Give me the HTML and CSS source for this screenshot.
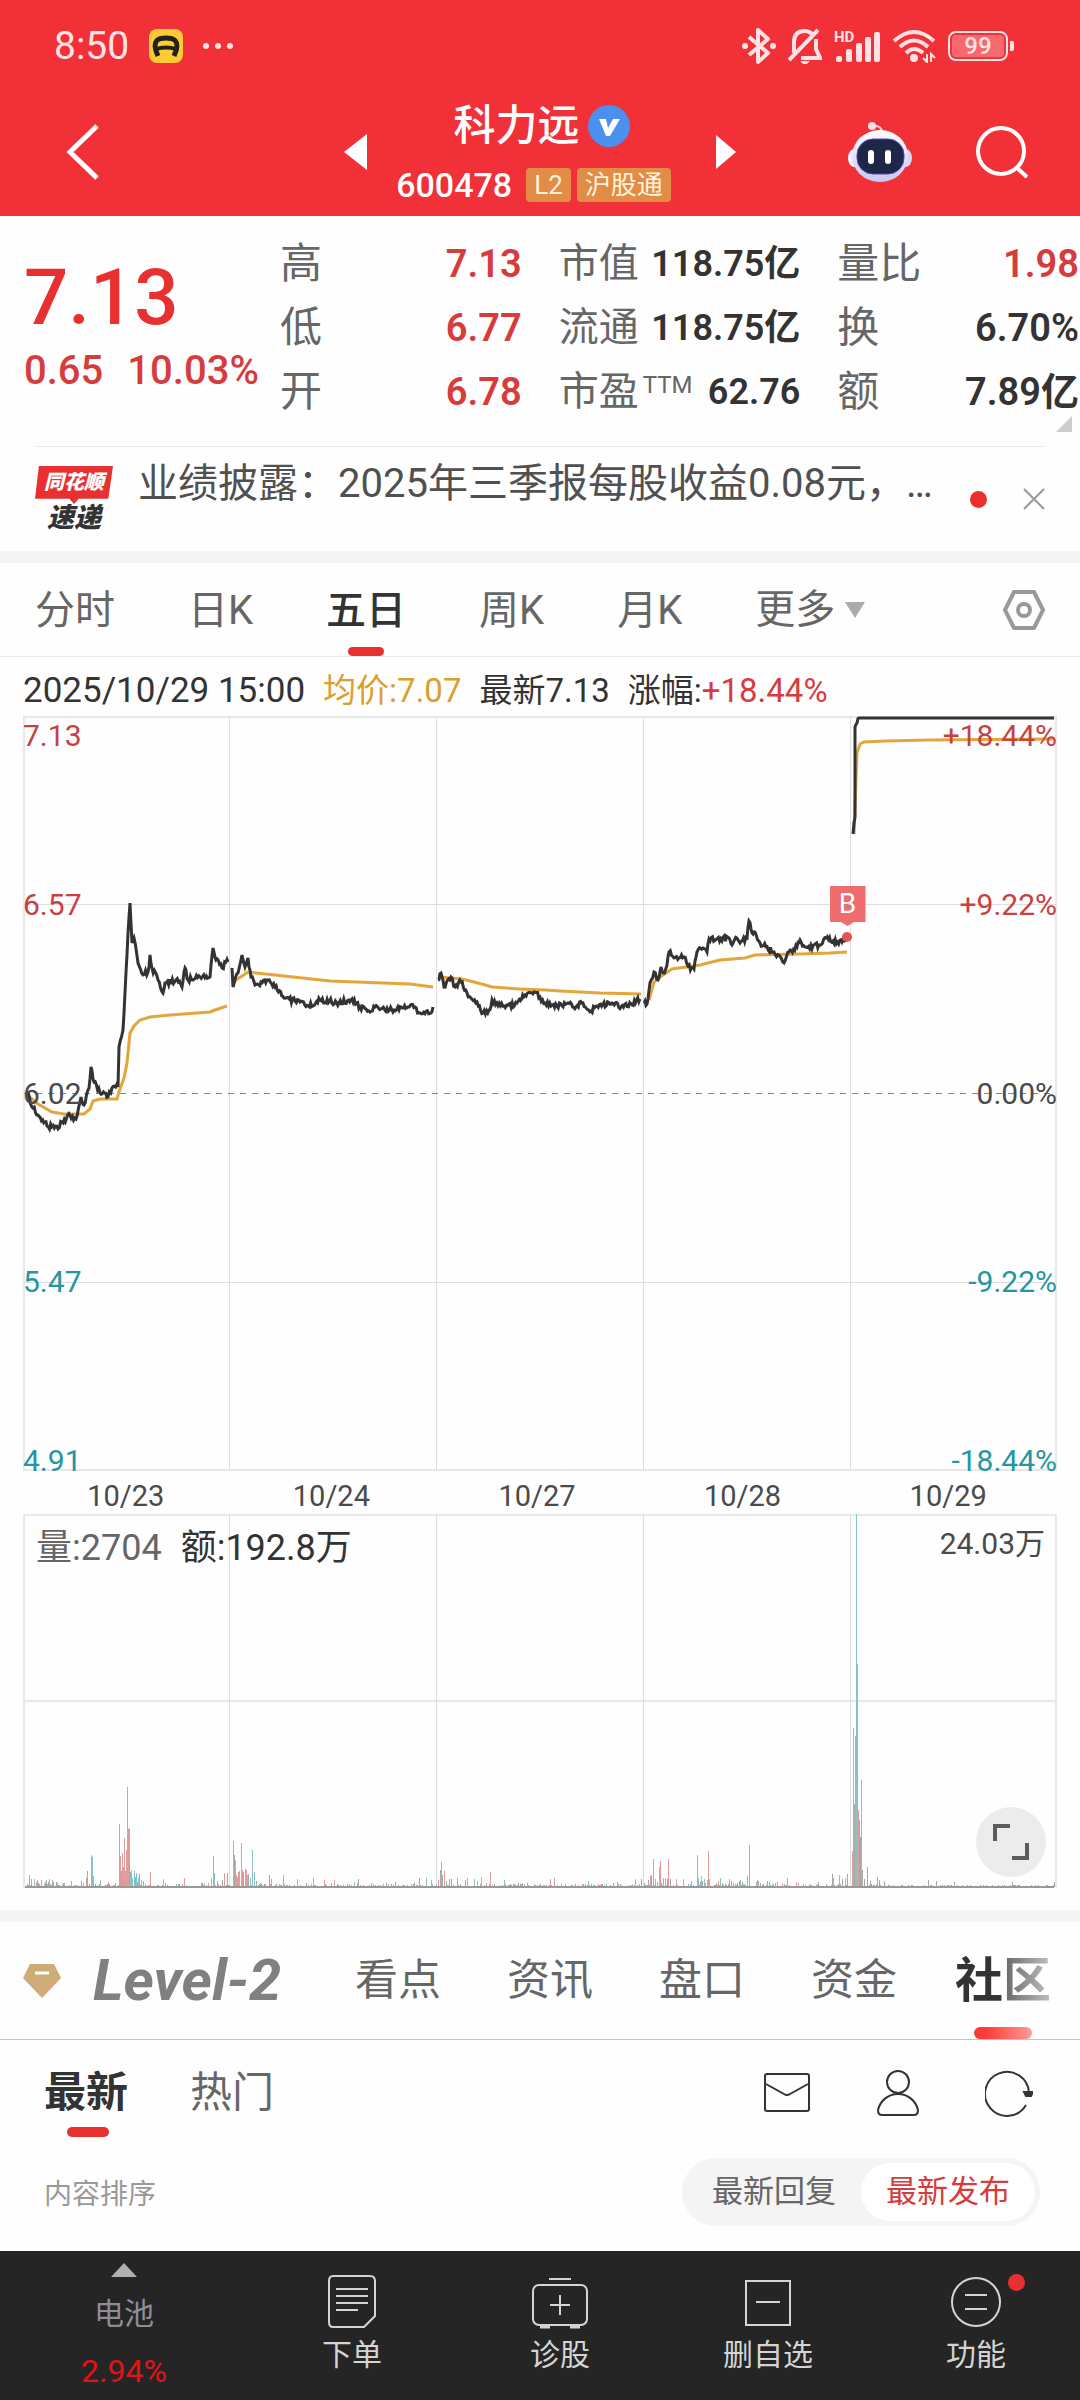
FILE: index.html
```html
<!DOCTYPE html>
<html lang="zh-CN">
<head>
    <meta charset="UTF-8">
    <meta name="viewport" content="width=device-width, initial-scale=1.0">
    <title>科力远 600478</title>
    <link rel="stylesheet" href="styles.css">
</head>
<body>

    <header class="header">
        <div class="status-bar">
            <span class="clock">8:50</span>
            <svg class="app-icon" width="34" height="34" viewBox="0 0 34 34">
                <rect width="34" height="34" rx="8" fill="#ffcb35"/>
                <path d="M9 27C1 10 11 9 17 9S33 10 25 27" fill="none" stroke="#22221c" stroke-width="5"/>
                <path d="M7 20Q17 17 27 20" fill="none" stroke="#22221c" stroke-width="4"/>
            </svg>
            <svg width="30" height="8" viewBox="0 0 30 8" fill="#ffe3e4">
                <circle cx="3" cy="4" r="3"/><circle cx="15" cy="4" r="3"/><circle cx="27" cy="4" r="3"/>
            </svg>
            <div class="status-icons">
                <svg width="34" height="38" viewBox="0 0 34 38">
                    <path d="M7 10L26 26L16 35V3L26 12L7 28" fill="none" stroke="#ffe3e4" stroke-width="4" stroke-linejoin="round"/>
                    <circle cx="3" cy="19" r="3" fill="#ffe3e4"/><circle cx="31" cy="19" r="3" fill="#ffe3e4"/>
                </svg>
                <svg width="34" height="38" viewBox="0 0 34 38" fill="none" stroke="#ffe3e4" stroke-width="4">
                    <path d="M1 33L30 3"/>
                    <path d="M6 26V15Q6 4 17 4Q21 4 24 7"/>
                    <path d="M28 12V22L32 31H13"/>
                    <path d="M12 34H22L19 37H15Z" fill="#ffe3e4" stroke="none"/>
                </svg>
                <svg width="46" height="34" viewBox="0 0 46 34" fill="#ffe3e4">
                    <text x="0" y="13" class="hd-text">HD</text>
                    <rect x="2" y="27" width="6" height="6" rx="2"/>
                    <rect x="12" y="20" width="6" height="13" rx="2"/>
                    <rect x="22" y="14" width="6" height="19" rx="2"/>
                    <rect x="31" y="8" width="6" height="25" rx="2"/>
                    <rect x="40" y="3" width="6" height="30" rx="2"/>
                </svg>
                <svg width="44" height="34" viewBox="0 0 44 34" fill="none" stroke="#ffe3e4" stroke-width="4">
                    <path d="M2 12Q22-6 42 12"/>
                    <path d="M8 18Q22 5 36 18"/>
                    <path d="M14 24Q22 16 31 24"/>
                    <circle cx="22" cy="29" r="4" fill="#ffe3e4" stroke="none"/>
                    <path d="M35 25V33L31 29M39 33V25L43 29" stroke-width="2"/>
                </svg>
                <span class="battery"><span class="battery-level">99</span></span>
            </div>
        </div>

        <nav class="title-bar">
            <button class="icon-btn back-btn" aria-label="返回">
                <svg width="34" height="58" viewBox="0 0 34 58"><path d="M31 3L4 29L31 55" fill="none" stroke="#fff" stroke-width="5"/></svg>
            </button>
            <div class="stock-switch">
                <button class="icon-btn" aria-label="上一只">
                    <svg width="23" height="36" viewBox="0 0 23 36"><path d="M23 0V36L0 18Z" fill="#fff"/></svg>
                </button>
                <div class="stock-title">
                    <h1>科力远
                        <svg width="42" height="42" viewBox="0 0 42 42">
                            <circle cx="21" cy="21" r="21" fill="#4a90ec"/>
                            <path d="M11 14H18L20 23L25 14H32L22 31H18Z" fill="#fff"/>
                        </svg>
                    </h1>
                    <div class="stock-code">600478 <span class="badge">L2</span><span class="badge">沪股通</span></div>
                </div>
                <button class="icon-btn" aria-label="下一只">
                    <svg width="20" height="34" viewBox="0 0 20 34"><path d="M0 0V34L20 17Z" fill="#fff"/></svg>
                </button>
            </div>
            <div class="title-actions">
                <button class="icon-btn" aria-label="助手">
                    <svg width="64" height="62" viewBox="0 0 64 62">
                        <defs>
                            <linearGradient id="robot" x1="0" y1="0" x2="0" y2="1"><stop offset="0" stop-color="#fff"/><stop offset="1" stop-color="#c9c6f3"/></linearGradient>
                        </defs>
                        <circle cx="24" cy="5" r="4" fill="#f6dfe9"/>
                        <path d="M25 5Q34 4 34 12" fill="none" stroke="#f6dfe9" stroke-width="2"/>
                        <ellipse cx="6" cy="37" rx="6" ry="9" fill="#f3f0ff"/><ellipse cx="58" cy="37" rx="6" ry="9" fill="#d9d6f8"/>
                        <ellipse cx="32" cy="35" rx="28" ry="26" fill="url(#robot)"/>
                        <rect x="9" y="18" width="47" height="35" rx="16" fill="#1e2747" stroke="#5a3fc0" stroke-width="1"/>
                        <rect x="20" y="29" width="6" height="14" rx="3" fill="#fff"/><rect x="37" y="29" width="6" height="14" rx="3" fill="#fff"/>
                    </svg>
                </button>
                <button class="icon-btn" aria-label="搜索">
                    <svg width="52" height="54" viewBox="0 0 52 54" fill="none" stroke="#fff" stroke-width="4">
                        <circle cx="25" cy="26" r="23"/><path d="M41 43L51 52"/>
                    </svg>
                </button>
            </div>
        </nav>
    </header>

    <section class="quote">
        <div class="price">
            <div class="price-last">7.13</div>
            <div class="price-change"><span>0.65</span><span>10.03%</span></div>
        </div>
        <div class="stats">
            <dl>
                <dt>高</dt><dd class="up">7.13</dd>
                <dt>低</dt><dd class="up">6.77</dd>
                <dt>开</dt><dd class="up">6.78</dd>
            </dl>
            <dl class="compact">
                <dt>市值</dt><dd>118.75亿</dd>
                <dt>流通</dt><dd>118.75亿</dd>
                <dt>市盈<sup>TTM</sup></dt><dd>62.76</dd>
            </dl>
            <dl>
                <dt>量比</dt><dd class="up">1.98</dd>
                <dt>换</dt><dd>6.70%</dd>
                <dt>额</dt><dd>7.89亿</dd>
            </dl>
        </div>
    </section>

    <section class="news">
        <div class="news-logo"><span class="news-brand">同花顺</span><span class="news-sub">速递</span></div>
        <a href="#" class="news-text">业绩披露：2025年三季报每股收益0.08元，…</a>
        <span class="dot"></span>
        <button class="icon-btn news-close" aria-label="关闭">
            <svg width="22" height="22" viewBox="0 0 22 22"><path d="M1 1L21 21M21 1L1 21" stroke="#999" stroke-width="2"/></svg>
        </button>
    </section>

    <nav class="period-tabs">
        <button>分时</button>
        <button>日K</button>
        <button class="active">五日</button>
        <button>周K</button>
        <button>月K</button>
        <button class="more">更多<svg width="20" height="16" viewBox="0 0 20 16"><path d="M0 0H20L10 16Z" fill="#aaa"/></svg></button>
        <button class="chart-settings" aria-label="设置">
            <svg width="44" height="42" viewBox="0 0 44 42" fill="none" stroke="#999" stroke-width="4">
                <path d="M12 3H32L41 21L32 39H12L3 21Z" stroke-linejoin="round"/><circle cx="22" cy="21" r="6"/>
            </svg>
        </button>
    </nav>

    <main class="charts">
        <div class="chart-info">
            <span class="info-date">2025/10/29 15:00</span>
            <span class="avg">均价:7.07</span>
            <span>最新7.13</span>
            <span class="info-rate">涨幅:<span class="up">+18.44%</span></span>
        </div>

        <div class="chart">
            <svg id="price-chart" viewBox="23 716 1034 755">
                <path class="frame" d="M24 717H1056V1470H24Z"/>
                <path class="grid" d="M24 904.500H1056M24 1282.500H1056M229.500 717V1470M436.500 717V1470M643.500 717V1470M850.500 717V1470"/>
                <path class="zero" d="M24 1093.500H1056"/>
            </svg>
            <div class="axis axis-left">
                <span class="l0 up">7.13</span><span class="l1 up">6.57</span><span class="l2">6.02</span><span class="l3 down">5.47</span><span class="l4 down">4.91</span>
            </div>
            <div class="axis axis-right">
                <span class="l0 up">+18.44%</span><span class="l1 up">+9.22%</span><span class="l2">0.00%</span><span class="l3 down">-9.22%</span><span class="l4 down">-18.44%</span>
            </div>
            <span class="buy-mark">B</span>
        </div>

        <div class="dates"><span>10/23</span><span>10/24</span><span>10/27</span><span>10/28</span><span>10/29</span></div>

        <div class="chart">
            <svg id="volume-chart" viewBox="23 0 1034 374">
                <path class="frame" d="M24 374V1H1056V374M24 187H1056"/>
                <path class="grid" d="M229.500 0V374M436.500 0V374M643.500 0V374M850.500 0V374"/>
            </svg>
            <div class="volume-info"><span class="muted">量:2704</span><span>额:192.8万</span><span class="volume-max">24.03万</span></div>
            <button class="expand-btn" aria-label="全屏">
                <svg width="38" height="38" viewBox="0 0 38 38" fill="none" stroke="#5c5c5c" stroke-width="4">
                    <path d="M3 18V3H18M35 20V35H20"/>
                </svg>
            </button>
        </div>
    </main>

    <nav class="content-tabs">
        <svg width="40" height="36" viewBox="0 0 40 36">
            <path d="M8 1H32L39 15L20 35L1 15Z" fill="#cfab78"/><path d="M13 10H27" stroke="#fff" stroke-width="3"/>
        </svg>
        <a href="#" class="level2">Level-2</a>
        <a href="#">看点</a>
        <a href="#">资讯</a>
        <a href="#">盘口</a>
        <a href="#">资金</a>
        <a href="#" class="active">社区</a>
    </nav>

    <section class="community">
        <div class="community-head">
            <button class="active">最新</button>
            <button>热门</button>
            <div class="community-actions">
                <button class="icon-btn" aria-label="消息">
                    <svg width="48" height="48" viewBox="0 0 48 48" fill="none" stroke="#333" stroke-width="2">
                        <rect x="2" y="5" width="44" height="37" rx="2"/><path d="M3 15L21 25Q24 27 27 25L45 15"/>
                    </svg>
                </button>
                <button class="icon-btn" aria-label="我的">
                    <svg width="48" height="48" viewBox="0 0 48 48" fill="none" stroke="#333" stroke-width="2">
                        <circle cx="24" cy="13" r="11"/><path d="M8 46Q4 46 4 41C6 32 14 25 24 25S42 32 44 41Q44 46 40 46Z"/>
                    </svg>
                </button>
                <button class="icon-btn" aria-label="刷新">
                    <svg width="48" height="48" viewBox="0 0 48 48" fill="none" stroke="#333" stroke-width="2">
                        <path d="M41 36A22 22 0 1 1 44 24"/><path d="M39 23H48L46 27H41Z" fill="#333"/>
                    </svg>
                </button>
            </div>
        </div>
        <div class="sort">
            <span>内容排序</span>
            <div class="segment">
                <button>最新回复</button>
                <button class="active">最新发布</button>
            </div>
        </div>
    </section>

    <footer class="bottom-bar">
        <a href="#" class="sector">
            <svg width="26" height="14" viewBox="0 0 26 14"><path d="M0 14H26L13 0Z" fill="#b0b0b0"/></svg>
            <span>电池</span>
            <span class="sector-rate">2.94%</span>
        </a>
        <a href="#">
            <svg width="56" height="56" viewBox="0 0 56 56" fill="none" stroke="#d4d4d4" stroke-width="2">
                <path d="M9 3H46Q51 3 51 8V43L40 54H9Q5 54 5 49V8Q5 3 9 3Z"/><path d="M12 16H44M12 23H44M12 30H44M12 37H34"/>
            </svg>
            <span>下单</span>
        </a>
        <a href="#">
            <svg width="56" height="56" viewBox="0 0 56 56" fill="none" stroke="#d4d4d4" stroke-width="2">
                <path d="M17 6H39M28 22V42M18 32H38"/><rect x="1" y="12" width="54" height="40" rx="6"/><path d="M8 54H18M38 54H48" stroke-width="3"/>
            </svg>
            <span>诊股</span>
        </a>
        <a href="#">
            <svg width="56" height="56" viewBox="0 0 56 56" fill="none" stroke="#d4d4d4" stroke-width="2">
                <rect x="6" y="8" width="44" height="44"/><path d="M16 29H40"/>
            </svg>
            <span>删自选</span>
        </a>
        <a href="#">
            <svg width="56" height="56" viewBox="0 0 56 56" fill="none" stroke="#d4d4d4" stroke-width="2">
                <circle cx="28" cy="29" r="24"/><path d="M17 22H39M17 36H39"/>
            </svg>
            <span>功能</span>
            <i class="dot"></i>
        </a>
    </footer>

    <script src="chart.js"></script>
</body>
</html>
```
FILE: styles.css
```css
:root {
    --red: #e93030;
    --up: #d63c3c;
    --down: #2396a0;
    --gold: #dc9f2c;
    --text: #333333;
    --text-2: #666666;
    --text-3: #999999;
    --header: #f13038;
    --status: #ffe3e4;
    --line: #e8e8e8;
    --strip: #f4f4f4;
}

* {
    box-sizing: border-box;
}

body {
    margin: 0;
    font-family: Roboto, "Noto Sans CJK SC", sans-serif;
    color: var(--text);
    background: #fefefe;
}

button {
    padding: 0;
    border: none;
    background: none;
    font: inherit;
    color: inherit;
}

a {
    color: inherit;
    text-decoration: none;
}

svg {
    display: block;
    flex: none;
}

.up {
    color: var(--up);
}

.down {
    color: var(--down);
}

.dot {
    width: 17px;
    height: 17px;
    border-radius: 50%;
    background: var(--red);
}

/* Header */
.header {
    background: var(--header);
    color: #fff;
}

.status-bar {
    display: flex;
    align-items: center;
    gap: 20px;
    height: 88px;
    padding: 4px 72px 0 54px;
    color: var(--status);
}

.clock {
    font-size: 39px;
}

.status-icons {
    display: flex;
    align-items: center;
    gap: 12px;
    margin-left: auto;
}

.hd-text {
    font-size: 15px;
    font-weight: 700;
}

.battery {
    position: relative;
    width: 60px;
    height: 30px;
    padding: 2px;
    border: 2px solid var(--status);
    border-radius: 8px;
}

.battery::after {
    content: "";
    position: absolute;
    right: -8px;
    top: 8px;
    width: 4px;
    height: 10px;
    border-radius: 0 2px 2px 0;
    background: var(--status);
}

.battery-level {
    display: block;
    height: 22px;
    border-radius: 4px;
    background: #f7696f;
    font-size: 24px;
    font-weight: 500;
    line-height: 22px;
    text-align: center;
}

.title-bar {
    display: grid;
    grid-template-columns: 1fr 392px 1fr;
    align-items: center;
    height: 128px;
}

.back-btn {
    justify-self: start;
    padding-left: 66px;
}

.stock-switch {
    display: flex;
    align-items: center;
    justify-content: space-between;
}

.stock-title {
    display: flex;
    flex-direction: column;
    align-items: center;
    gap: 18px;
}

.stock-title h1 {
    display: flex;
    align-items: center;
    gap: 8px;
    margin: 0;
    font-size: 42px;
    font-weight: 500;
    line-height: 48px;
}

.stock-code {
    display: flex;
    align-items: center;
    gap: 6px;
    margin-right: 16px;
    font-size: 34px;
    font-weight: 500;
    line-height: 34px;
}

.badge {
    padding: 0 8px;
    border-radius: 4px;
    background: #e28c48;
    color: #fff3d8;
    font-size: 26px;
    font-weight: 400;
}

.badge:first-child {
    margin-left: 8px;
}

.title-actions {
    display: flex;
    align-items: center;
    justify-content: flex-end;
    gap: 64px;
    padding-right: 52px;
}

/* Quote */
.quote {
    display: flex;
    position: relative;
    padding: 16px 1px 22px 24px;
}

.quote::after {
    content: "";
    position: absolute;
    right: 8px;
    bottom: 14px;
    border: 8px solid transparent;
    border-right-color: #ccc;
    border-bottom-color: #ccc;
}

.price {
    flex: 0 0 256px;
    padding-top: 26px;
    color: var(--red);
    font-weight: 500;
    white-space: nowrap;
}

.price-last {
    font-size: 78px;
    line-height: 80px;
}

.price-change {
    display: flex;
    gap: 24px;
    margin-top: 9px;
    color: var(--up);
    font-size: 40px;
    line-height: 48px;
}

.stats {
    display: grid;
    grid-template-columns: repeat(3, 1fr);
    gap: 37px;
    flex: 1;
}

.stats dl {
    display: grid;
    grid-template-columns: auto 1fr;
    grid-auto-rows: 64px;
    align-items: center;
    margin: 0;
    font-size: 42px;
    line-height: 64px;
    white-space: nowrap;
}

.stats dt {
    color: var(--text-2);
}

.stats dd {
    margin: 0;
    font-size: 38px;
    font-weight: 600;
    text-align: right;
}

.stats .compact {
    grid-template-columns: 84px 1fr;
    font-size: 40px;
}

.stats .compact dd {
    font-size: 36px;
}

.stats sup {
    margin-left: 4px;
    font-size: 24px;
    line-height: 0;
    vertical-align: 12px;
}

/* News strip */
.news {
    display: flex;
    align-items: center;
    margin: 0 35px;
    height: 105px;
    border-top: 1px solid #ececec;
}

.news-logo {
    display: flex;
    flex-direction: column;
    align-items: center;
    width: 78px;
    margin-right: 25px;
    font-style: italic;
    font-weight: 900;
}

.news-brand {
    width: 78px;
    height: 38px;
    background: var(--red);
    clip-path: polygon(5% 0, 100% 0, 94% 86%, 56% 86%, 50% 100%, 44% 86%, 0 86%);
    color: #fff;
    font-size: 20px;
    line-height: 33px;
    text-align: center;
}

.news-sub {
    font-size: 27px;
    line-height: 28px;
}

.news-text {
    flex: 1;
    margin-bottom: 30px;
    overflow: hidden;
    color: #505050;
    font-size: 40px;
    line-height: 48px;
    white-space: nowrap;
}

.news-close {
    margin-left: 36px;
}

/* Period tabs */
.period-tabs {
    display: flex;
    align-items: center;
    gap: 73px;
    height: 106px;
    padding: 0 34px 0 35px;
    border-top: 12px solid var(--strip);
    border-bottom: 1px solid var(--line);
    color: var(--text-2);
    font-size: 40px;
}

.period-tabs button {
    position: relative;
    height: 93px;
    line-height: 95px;
}

.period-tabs .active {
    color: var(--text);
    font-weight: 500;
}

.period-tabs .active::after {
    content: "";
    position: absolute;
    left: 50%;
    bottom: 0;
    width: 36px;
    height: 9px;
    margin-left: -18px;
    border-radius: 5px;
    background: var(--red);
}

.period-tabs .more {
    display: flex;
    align-items: center;
    gap: 10px;
}

.period-tabs .chart-settings {
    margin-left: auto;
}

/* Charts */
.charts {
    padding: 0 23px 22px;
}

.chart-info {
    display: flex;
    gap: 18px;
    padding-top: 8px;
    font-size: 33px;
    line-height: 51px;
    white-space: nowrap;
}

.info-date {
    font-size: 35px;
}

.avg {
    color: var(--gold);
}

.chart {
    position: relative;
}

.chart > svg {
    width: 100%;
    height: auto;
}

.frame {
    fill: none;
    stroke: var(--line);
    stroke-width: 2;
}

.grid {
    fill: none;
    stroke: #dedede;
    stroke-width: 1;
}

.zero {
    stroke: #888;
    stroke-width: 1;
    stroke-dasharray: 6 6;
    shape-rendering: crispEdges;
}

.price-line {
    fill: none;
    stroke: var(--text);
    stroke-width: 3;
}

.avg-line {
    fill: none;
    stroke: #e2a63a;
    stroke-width: 3;
}

.base-line {
    stroke: #999;
    stroke-width: 2;
}

.axis {
    position: absolute;
    top: 0;
    bottom: 0;
    left: 0;
    color: #4a4a4a;
    font-size: 30px;
    line-height: 36px;
}

.axis-right {
    left: auto;
    right: 0;
}

.axis span {
    position: absolute;
    margin-top: -18px;
}

.axis-right span {
    right: 0;
}

.axis .up {
    color: #c84040;
}

.axis .down {
    color: var(--down);
}

.axis .l0 { top: 0; margin-top: 2px; }
.axis .l1 { top: 25%; }
.axis .l2 { top: 50%; }
.axis .l3 { top: 75%; }
.axis .l4 { top: 100%; margin-top: -28px; }

.buy-mark {
    position: absolute;
    left: 78%;
    top: 170px;
    width: 36px;
    height: 40px;
    background: #ef6c6e;
    clip-path: polygon(0 0, 100% 0, 100% 90%, 68% 90%, 50% 100%, 32% 90%, 0 90%);
    color: #fff;
    font-size: 28px;
    line-height: 36px;
    text-align: center;
}

.dates {
    display: grid;
    grid-template-columns: repeat(5, 1fr);
    height: 43px;
    padding: 4px 6px 0 0;
    color: #4a4a4a;
    font-size: 29px;
    line-height: 43px;
    text-align: center;
}

.volume-info {
    position: absolute;
    top: 10px;
    left: 13px;
    right: 12px;
    display: flex;
    gap: 19px;
    font-size: 36px;
    line-height: 48px;
}

.muted {
    color: var(--text-2);
}

.volume-max {
    margin-left: auto;
    color: #4a4a4a;
    font-size: 30px;
    line-height: 40px;
}

.chart .expand-btn {
    position: absolute;
    right: 11px;
    bottom: 11px;
    display: flex;
    align-items: center;
    justify-content: center;
    width: 70px;
    height: 70px;
    border-radius: 50%;
    background: #ececec;
}

/* Content tabs */
.content-tabs {
    display: flex;
    align-items: center;
    gap: 66px;
    height: 130px;
    padding: 0 29px 0 22px;
    border-top: 12px solid var(--strip);
    border-bottom: 1px solid #c4c4c4;
    color: var(--text-2);
    font-size: 43px;
    line-height: 117px;
    white-space: nowrap;
}

.content-tabs .level2 {
    flex: 1;
    margin-left: -35px;
    color: #808080;
    font-size: 58px;
    font-style: italic;
    font-weight: 700;
}

.content-tabs .active {
    position: relative;
    margin-left: -8px;
    background: linear-gradient(to right, #333 50%, #6a6a6a 52%, #c0c0c0);
    background-clip: text;
    color: transparent;
    font-size: 48px;
    font-weight: 700;
}

.content-tabs .active::after {
    content: "";
    position: absolute;
    left: 50%;
    bottom: 0;
    width: 58px;
    height: 12px;
    margin-left: -29px;
    border-radius: 6px;
    background: linear-gradient(to right, #fb3c35 20%, #fd9a98);
}

/* Community */
.community {
    padding: 24px 40px 25px 44px;
}

.community-head {
    display: flex;
    gap: 62px;
    height: 73px;
    color: var(--text-2);
    font-size: 42px;
    line-height: 58px;
}

.community-head > button {
    position: relative;
    align-self: stretch;
    display: flex;
}

.community-head > .active {
    color: var(--text);
    font-weight: 700;
}

.community-head > .active::after {
    content: "";
    position: absolute;
    left: 50%;
    bottom: 0;
    width: 42px;
    height: 10px;
    margin-left: -19px;
    border-radius: 5px;
    background: var(--red);
}

.community-actions {
    display: flex;
    gap: 63px;
    margin-left: auto;
    padding: 5px 7px 0 0;
    align-items: flex-start;
}

.sort {
    display: flex;
    align-items: center;
    justify-content: space-between;
    margin-top: 21px;
    color: var(--text-3);
    font-size: 28px;
}

.segment {
    display: flex;
    padding: 5px;
    border-radius: 34px;
    background: var(--strip);
    color: var(--text-2);
    font-size: 31px;
    line-height: 58px;
}

.segment button {
    padding: 0 25px;
    border-radius: 29px;
}

.segment .active {
    background: #fff;
    color: var(--up);
}

/* Bottom bar */
.bottom-bar {
    display: grid;
    grid-template-columns: 248fr 208fr 208fr 208fr 208fr;
    background: #252525;
    color: #d4d4d4;
    font-size: 30px;
    line-height: 40px;
}

.bottom-bar a {
    position: relative;
    display: flex;
    flex-direction: column;
    align-items: center;
    gap: 6px;
    padding-top: 22px;
}

.bottom-bar .sector {
    gap: 17px;
    padding: 12px 0 9px;
    color: #8e8e98;
}

.bottom-bar .sector-rate {
    color: #e01414;
    font-size: 32px;
}

.bottom-bar .dot {
    position: absolute;
    top: 23px;
    left: 50%;
    margin-left: 32px;
}
```
FILE: chart.js
```javascript
const SVG_NS = 'http://www.w3.org/2000/svg';

// one array per trading day, "x,y" pairs
const PRICE = [
    '27,1093 33,1108 38,1115 45,1122 47,1126 58,1129 62,1122 70,1115 76,1119 81,1097 84,1105 89,1088 91,1067 94,1082 100,1093 108,1097 112,1088 118,1087 119,1047 123,1030 125,993 128,933 130,903 132,943 134,938 138,963 143,975 148,972 150,955 152,968 158,980 163,993 165,983 176,980 182,987 185,968 188,980 200,977 210,977 213,948 216,960 222,968 226,962 228,962',
    '232,968 233,987 238,973 242,955 245,967 248,958 251,977 255,985 267,980 275,987 284,998 300,1002 313,1006 320,1000 339,1003 351,1000 360,1007 370,1012 375,1007 399,1010 408,1007 415,1007 420,1013 431,1013 433,1007',
    '438,980 441,973 444,987 451,977 455,987 461,982 467,993 477,1002 483,1013 489,1010 492,1000 504,1006 517,1003 525,995 534,992 540,997 545,1003 557,1006 568,1003 576,1007 583,1003 591,1011 597,1006 612,1003 621,1007 631,1004 640,999',
    '644,1003 647,1004 650,983 654,972 658,980 661,967 663,973 667,965 669,952 674,958 684,957 688,966 694,969 697,952 703,948 707,952 709,939 729,938 732,945 737,938 740,943 747,938 749,921 752,933 755,932 760,943 774,952 784,963 789,952 797,947 800,940 805,947 819,945 826,938 833,941 842,942 847,937',
    '853,834 855,817 855,727 857,723 859,718 1054,718'
];

const AVERAGE = [
    '27,1095 38,1104 52,1112 64,1114 84,1114 90,1109 93,1101 100,1099 117,1099 119,1092 124,1078 127,1063 130,1033 134,1026 140,1020 150,1017 170,1015 210,1012 215,1010 227,1006',
    '233,982 248,972 275,975 330,981 410,984 433,987',
    '440,977 462,979 478,983 492,987 520,989 545,990 560,991 600,993 641,994',
    '649,1000 654,982 660,977 672,969 700,965 720,960 745,958 755,955 800,954 830,953 847,952',
    '854,834 857,753 860,744 864,742 885,741 930,740 1054,739'
];

// x, height, color (r = up, t = down, g = flat)
const VOLUME = [
    [29, 12, 't'], [31, 8, 't'], [34, 8, 't'], [37, 7, 'g'], [41, 7, 't'], [46, 7, 'g'], [49, 8, 't'], [71, 6, 'r'], [81, 6, 'r'],
    [86, 9, 'r'], [87, 16, 'g'], [91, 32, 'r'], [92, 30, 't'], [93, 11, 't'], [100, 7, 't'],
    [119, 63, 'r'], [120, 31, 'r'], [121, 16, 'g'], [122, 34, 'r'], [123, 20, 'r'], [124, 49, 'r'], [125, 16, 'r'], [126, 37, 'r'],
    [127, 100, 'r'], [128, 58, 'r'], [129, 59, 'r'], [129, 27, 'g'], [130, 15, 't'], [131, 17, 't'], [132, 9, 't'], [134, 16, 't'],
    [135, 10, 'g'], [136, 14, 't'], [138, 9, 't'], [139, 13, 'g'], [141, 7, 't'], [143, 6, 'g'], [150, 15, 'r'], [163, 8, 'r'], [184, 9, 'r'],
    [211, 9, 'r'], [213, 31, 'r'], [214, 14, 't'], [217, 6, 't'], [222, 7, 'g'], [224, 14, 'r'], [227, 14, 'g'],
    [233, 46, 't'], [234, 32, 'g'], [235, 27, 'r'], [236, 12, 'r'], [237, 10, 'r'], [238, 15, 'r'], [239, 16, 'r'], [241, 44, 't'],
    [242, 17, 'r'], [243, 15, 'g'], [245, 18, 'r'], [246, 17, 'r'], [247, 12, 't'], [248, 13, 'g'], [250, 9, 't'], [252, 37, 't'],
    [254, 15, 't'], [256, 6, 'g'], [269, 12, 'g'], [271, 8, 't'], [283, 12, 't'], [297, 8, 't'], [313, 9, 't'], [324, 7, 'r'],
    [334, 7, 'r'], [358, 8, 'g'], [395, 5, 'g'], [419, 9, 'g'], [426, 9, 't'], [431, 7, 't'],
    [438, 7, 'r'], [440, 17, 'g'], [441, 25, 'r'], [442, 12, 'g'], [444, 16, 'r'], [446, 6, 't'], [449, 8, 'r'], [451, 8, 'g'], [457, 9, 'r'],
    [465, 7, 'g'], [467, 9, 't'], [474, 8, 't'], [477, 6, 't'], [481, 10, 't'], [490, 15, 'r'], [504, 7, 't'], [550, 8, 'r'], [554, 9, 'g'],
    [588, 6, 't'], [617, 5, 'g'], [635, 8, 'r'], [641, 8, 'g'],
    [648, 7, 'g'], [650, 11, 'r'], [651, 12, 'g'], [653, 28, 'r'], [655, 8, 't'], [659, 20, 'r'], [660, 26, 'r'], [663, 9, 't'], [665, 9, 'r'],
    [667, 8, 'g'], [668, 28, 'r'], [670, 8, 'g'], [676, 8, 'r'], [683, 8, 't'], [697, 32, 'r'], [698, 9, 't'], [701, 11, 'r'], [704, 8, 't'],
    [708, 36, 'r'], [709, 8, 'r'], [720, 9, 't'], [729, 8, 't'], [740, 7, 't'], [747, 11, 'r'], [749, 42, 'r'], [757, 7, 't'], [758, 6, 'g'],
    [787, 9, 'r'], [796, 5, 'r'], [818, 5, 'g'], [832, 13, 'g'], [833, 9, 't'], [839, 12, 't'], [842, 8, 'g'], [845, 9, 'r'], [847, 13, 'g'],
    [852, 36, 'r'], [853, 159, 'r'], [854, 83, 'g'], [855, 151, 'r'], [856, 373, 't'], [857, 223, 'r'], [858, 77, 'r'], [859, 67, 'g'],
    [860, 50, 'g'], [861, 107, 'r'], [862, 17, 'g'], [864, 8, 'g'], [867, 20, 'g'], [870, 6, 'g'], [877, 10, 'g'], [879, 7, 'g'], [884, 6, 'g'],
    [928, 7, 'g'], [936, 6, 'g'], [954, 5, 'g'], [1012, 5, 'g'], [1054, 5, 'g']
];

const BAR_COLORS = { r: '#e29c9c', t: '#88c4c6', g: '#a8a8a8' };

let seed = 17;
function random() {
    seed = (seed * 16807) % 2147483647;
    return seed / 2147483647;
}

function add(parent, tag, attrs) {
    const el = document.createElementNS(SVG_NS, tag);
    Object.entries(attrs).forEach(([key, value]) => el.setAttribute(key, value));
    parent.appendChild(el);
}

// minute ticks between the key prices
function addTicks(day) {
    const points = day.split(' ').map(p => p.split(',').map(Number));
    const out = [points[0]];
    for (let i = 1; i < points.length; i++) {
        const [x0, y0] = points[i - 1];
        const [x1, y1] = points[i];
        const steps = Math.round((x1 - x0) / 1.2);
        for (let s = 1; s < steps && y0 !== 718; s++) {
            const t = s / steps;
            out.push([x0 + (x1 - x0) * t, y0 + (y1 - y0) * t + (random() - 0.5) * 6]);
        }
        out.push([x1, y1]);
    }
    return out.map(p => p.join(',')).join(' ');
}

const priceChart = document.getElementById('price-chart');
AVERAGE.forEach(day => add(priceChart, 'polyline', { class: 'avg-line', points: day }));
PRICE.forEach(day => add(priceChart, 'polyline', { class: 'price-line', points: addTicks(day) }));
add(priceChart, 'circle', { cx: 847, cy: 937, r: 5, fill: '#e25555' });

const volumeChart = document.getElementById('volume-chart');
function addBar(x, height, color) {
    add(volumeChart, 'rect', { x: x, y: 373 - height, width: 1, height: height, fill: BAR_COLORS[color] });
}
for (let x = 26; x < 1054; x++) {
    const busy = x < 60 || (x > 645 && x < 780);
    const h = x > 890 ? random() * 2 : random() * random() * (busy ? 8 : 5);
    addBar(x, Math.round(h), x > 860 ? 'g' : 'rtgg'[Math.floor(random() * 4)]);
}
VOLUME.forEach(bar => addBar(...bar));
add(volumeChart, 'path', { class: 'base-line', d: 'M25 373H1054' });
```
